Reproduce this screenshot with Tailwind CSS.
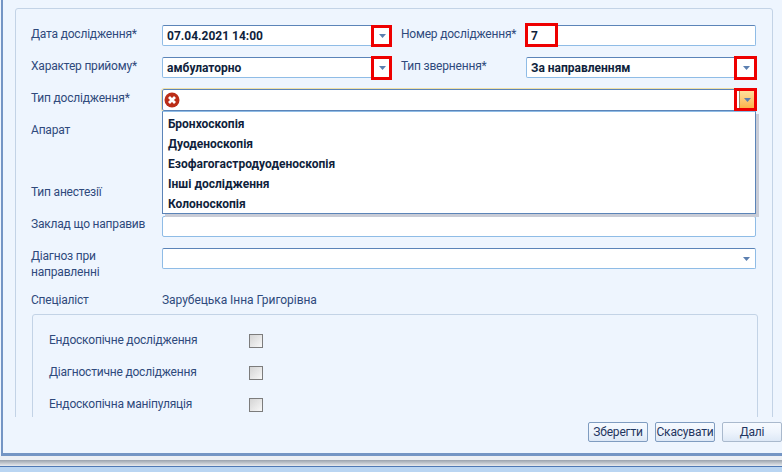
<!DOCTYPE html>
<html lang="uk">
<head>
  <meta charset="UTF-8" />
  <title>Дослідження</title>
  <script src="https://cdn.jsdelivr.net/npm/@tailwindcss/browser@4"></script>
</head>
<body class="w-[782px] h-[472px] overflow-hidden bg-[#eef5fe] font-['Roboto',sans-serif] text-[12px] tracking-[-0.2px] text-[#2f4a7c]">
  <div class="relative w-[782px] h-[472px] flex flex-col">

    <!-- window -->
    <div class="h-[456px] ml-px border-l-2 border-b-[3px] border-[#7495c4] flex flex-col">
      <div class="h-[417px] overflow-hidden pl-3 pr-[9px] pt-2">
        <div class="relative h-[500px] border border-[#c3d3e6] rounded-[3px] pl-[15px] pt-4">

          <div class="flex items-start h-[32px]">
            <div class="w-[131px] pt-[1px] leading-[16px]">Дата дослідження*</div>
            <div class="w-[230px] h-[21px] flex items-center justify-between bg-white border border-[#8fbce6] border-t-[#5b84b8] rounded-[2px] pl-1 pr-[5px] font-bold tracking-normal text-[#101f3c]">
              <span>07.04.2021 14:00</span>
              <svg width="7" height="4" viewBox="0 0 7 4"><path d="M0 0h7L3.5 4z" fill="#5b7fb0"/></svg>
            </div>
            <div class="w-[125px] ml-[9px] pt-[1px] leading-[16px]">Номер дослідження*</div>
            <div class="w-[230px] h-[21px] flex items-center bg-white border border-[#8fbce6] border-t-[#5b84b8] rounded-[2px] pl-1 font-bold tracking-normal text-[#101f3c]">7</div>
          </div>

          <div class="flex items-start h-[32px]">
            <div class="w-[131px] pt-[1px] leading-[16px]">Характер прийому*</div>
            <div class="w-[230px] h-[21px] flex items-center justify-between bg-white border border-[#8fbce6] border-t-[#5b84b8] rounded-[2px] pl-1 pr-[5px] font-bold tracking-normal text-[#101f3c]">
              <span>амбулаторно</span>
              <svg width="7" height="4" viewBox="0 0 7 4"><path d="M0 0h7L3.5 4z" fill="#5b7fb0"/></svg>
            </div>
            <div class="w-[125px] ml-[9px] pt-[1px] leading-[16px]">Тип звернення*</div>
            <div class="w-[230px] h-[21px] flex items-center justify-between bg-white border border-[#8fbce6] border-t-[#5b84b8] rounded-[2px] pl-1 pr-[5px] font-bold tracking-normal text-[#101f3c]">
              <span>За направленням</span>
              <svg width="7" height="4" viewBox="0 0 7 4"><path d="M0 0h7L3.5 4z" fill="#5b7fb0"/></svg>
            </div>
          </div>

          <div class="relative flex items-start h-[127px]">
            <div class="w-[131px] pt-[1px] leading-[16px]">Тип дослідження*</div>
            <div class="w-[594px] h-[22px] flex items-center justify-between bg-white border border-[#5b84b8] rounded-[2px] outline outline-1 outline-[#efe0a8] pl-[1px]">
              <svg width="16" height="16" viewBox="0 0 16 16">
                <circle cx="8" cy="8" r="7.5" fill="#bb2d17"/>
                <path d="M5 5l6 6M11 5l-6 6" stroke="#fff" stroke-width="2.8"/>
              </svg>
              <div class="w-[16px] h-[20px] flex items-center justify-center border-l border-[#9a8a66] bg-gradient-to-b from-[#fde3a0] to-[#fbb03c]">
                <svg width="7" height="4" viewBox="0 0 7 4"><path d="M0 0h7L3.5 4z" fill="#5b7fb0"/></svg>
              </div>
            </div>

            <!-- open list -->
            <div class="absolute left-[131px] top-[22px] w-[594px] h-[103px] z-10 bg-white border border-[#5b84b8] border-t-[#8fbce6] shadow-[3px_3px_0_#c9ccd6] pt-[2px] pl-[5px] font-bold tracking-normal text-[#101f3c]">
              <div class="h-[20px] leading-[20px]">Бронхоскопія</div>
              <div class="h-[20px] leading-[20px]">Дуоденоскопія</div>
              <div class="h-[20px] leading-[20px]">Езофагогастродуоденоскопія</div>
              <div class="h-[20px] leading-[20px]">Інші дослідження</div>
              <div class="h-[20px] leading-[20px]">Колоноскопія</div>
            </div>

            <div class="absolute left-0 top-[33px] leading-[16px]">Апарат</div>
            <div class="absolute left-0 top-[95px] leading-[16px]">Тип анестезії</div>
          </div>

          <div class="flex items-start h-[32px]">
            <div class="w-[131px] leading-[16px]">Заклад що направив</div>
            <div class="w-[594px] h-[21px] bg-white border border-[#8fbce6] rounded-[2px]"></div>
          </div>

          <div class="flex items-start h-[44px]">
            <div class="w-[131px] leading-[16px]">Діагноз при<br />направленні</div>
            <div class="w-[594px] h-[21px] flex items-center justify-end bg-white border border-[#8fbce6] border-t-[#5b84b8] rounded-[2px] pr-[5px]">
              <svg width="7" height="4" viewBox="0 0 7 4"><path d="M0 0h7L3.5 4z" fill="#5b7fb0"/></svg>
            </div>
          </div>

          <div class="flex items-start h-[22px]">
            <div class="w-[131px] leading-[16px]">Спеціаліст</div>
            <div class="leading-[16px] tracking-[-0.05px]">Зарубецька Інна Григорівна</div>
          </div>

          <div class="ml-[1px] mr-[14px] h-[200px] border border-[#c3d3e6] rounded-[3px] pl-[16px] pt-[17px]">
            <div class="flex items-start h-[32px]">
              <div class="w-[200px] leading-[16px]">Ендоскопічне дослідження</div>
              <div class="w-[14px] h-[14px] mt-[2px] border border-[#7c7c7c] bg-gradient-to-br from-[#d4d4d4] to-[#f8f8f8]"></div>
            </div>
            <div class="flex items-start h-[32px]">
              <div class="w-[200px] leading-[16px]">Діагностичне дослідження</div>
              <div class="w-[14px] h-[14px] mt-[2px] border border-[#7c7c7c] bg-gradient-to-br from-[#d4d4d4] to-[#f8f8f8]"></div>
            </div>
            <div class="flex items-start h-[32px]">
              <div class="w-[200px] leading-[16px]">Ендоскопічна маніпуляція</div>
              <div class="w-[14px] h-[14px] mt-[2px] border border-[#7c7c7c] bg-gradient-to-br from-[#d4d4d4] to-[#f8f8f8]"></div>
            </div>
          </div>
        </div>
      </div>

      <!-- buttons -->
      <div class="flex justify-end gap-[7px] pt-[5px] text-[#1f3560]">
        <div class="w-[60px] h-[20px] flex items-center justify-center rounded-[2px] border border-[#7f9cc0] bg-gradient-to-b from-[#f6faff] via-[#eef4fc] to-[#dde8f6]">Зберегти</div>
        <div class="w-[60px] h-[20px] flex items-center justify-center rounded-[2px] border border-[#7f9cc0] bg-gradient-to-b from-[#f6faff] via-[#eef4fc] to-[#dde8f6]">Скасувати</div>
        <div class="w-[60px] h-[20px] flex items-center justify-center rounded-[2px] border border-[#a9b9cd] bg-gradient-to-b from-[#f6faff] via-[#eef4fc] to-[#dde8f6]">Далі</div>
      </div>
    </div>

    <!-- bottom of the parent window -->
    <div class="h-[4px] bg-[#eceff4]"></div>
    <div class="h-[7px] bg-gradient-to-b from-[#9aa3ad] to-[#e8ebef] border-b border-[#4f79b4]"></div>
    <div class="h-[5px] bg-[#b9d5f2]"></div>

    <!-- red marks -->
    <div class="absolute left-[371px] top-[25px] w-[21px] h-[22px] border-[3px] border-[#ee0000]"></div>
    <div class="absolute left-[371px] top-[56px] w-[21px] h-[24px] border-[3px] border-[#ee0000]"></div>
    <div class="absolute left-[525px] top-[23px] w-[33px] h-[24px] border-[3px] border-[#ee0000]"></div>
    <div class="absolute left-[734px] top-[56px] w-[23px] h-[24px] border-[3px] border-[#ee0000]"></div>
    <div class="absolute left-[734px] top-[88px] w-[23px] h-[23px] border-[3px] border-[#ee0000]"></div>
  </div>
</body>
</html>
